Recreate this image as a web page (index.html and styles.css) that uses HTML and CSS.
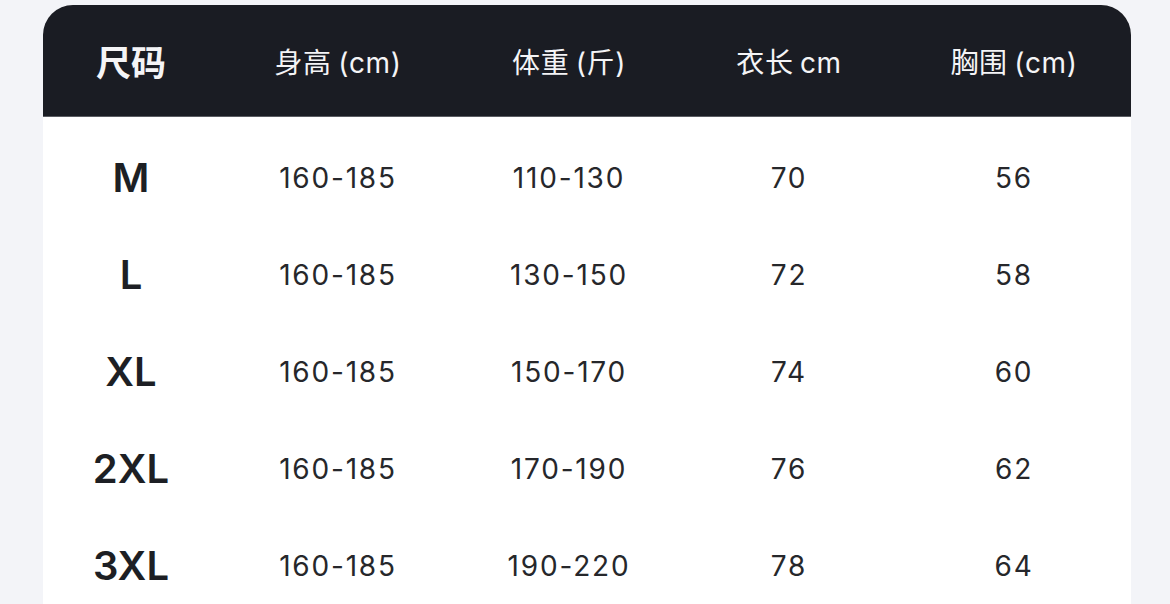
FILE: index.html
```html
<!DOCTYPE html>
<html lang="zh">
<head>
<meta charset="utf-8">
<title>尺码表</title>
<link rel="stylesheet" href="styles.css">
</head>
<body>
<div class="wrap">
  <div class="card">
    <div class="row head">
      <div class="cell first">尺码</div>
      <div class="cell">身高 (cm)</div>
      <div class="cell">体重 (斤)</div>
      <div class="cell">衣长 cm</div>
      <div class="cell">胸围 (cm)</div>
    </div>
    <div class="body">
      <div class="row">
        <div class="cell size">M</div><div class="cell">160-185</div><div class="cell">110-130</div><div class="cell">70</div><div class="cell">56</div>
      </div>
      <div class="row">
        <div class="cell size">L</div><div class="cell">160-185</div><div class="cell">130-150</div><div class="cell">72</div><div class="cell">58</div>
      </div>
      <div class="row">
        <div class="cell size">XL</div><div class="cell">160-185</div><div class="cell">150-170</div><div class="cell">74</div><div class="cell">60</div>
      </div>
      <div class="row">
        <div class="cell size">2XL</div><div class="cell">160-185</div><div class="cell">170-190</div><div class="cell">76</div><div class="cell">62</div>
      </div>
      <div class="row">
        <div class="cell size">3XL</div><div class="cell">160-185</div><div class="cell">190-220</div><div class="cell">78</div><div class="cell">64</div>
      </div>
    </div>
  </div>
</div>
</body>
</html>
```
FILE: styles.css
```css
html, body {
  margin: 0;
  padding: 0;
  background: #f3f4f8;
  overflow: hidden;
}
body {
  font-family: Inter, "Noto Sans CJK SC", sans-serif;
}
.wrap {
  padding: 5px 0 0 43px;
}
.card {
  width: 1088px;
  height: 640px;
  background: #ffffff;
  border-radius: 30px 30px 0 0;
  overflow: hidden;
}
.row {
  display: grid;
  grid-template-columns: 176px 238px 224px 216px 234px;
  align-items: center;
  height: 97px;
}
.cell {
  text-align: center;
  font-size: 28px;
  letter-spacing: 1.8px;
  color: #26272b;
  white-space: nowrap;
}
.head {
  height: 111px;
  background: #1a1c23;
  border-bottom: 1px solid #5a5c62;
}
.head .cell {
  color: #f4f4f6;
  font-size: 28px;
  letter-spacing: 0.6px;
  word-spacing: -2px;
}
.head .first {
  font-size: 35px;
  font-weight: 700;
  letter-spacing: 0;
  font-family: "Noto Sans CJK SC", sans-serif;
}
.body {
  padding-top: 12px;
}
.size {
  font-size: 40px;
  font-weight: 600;
  letter-spacing: 0;
  color: #1d1f24;
}
```
